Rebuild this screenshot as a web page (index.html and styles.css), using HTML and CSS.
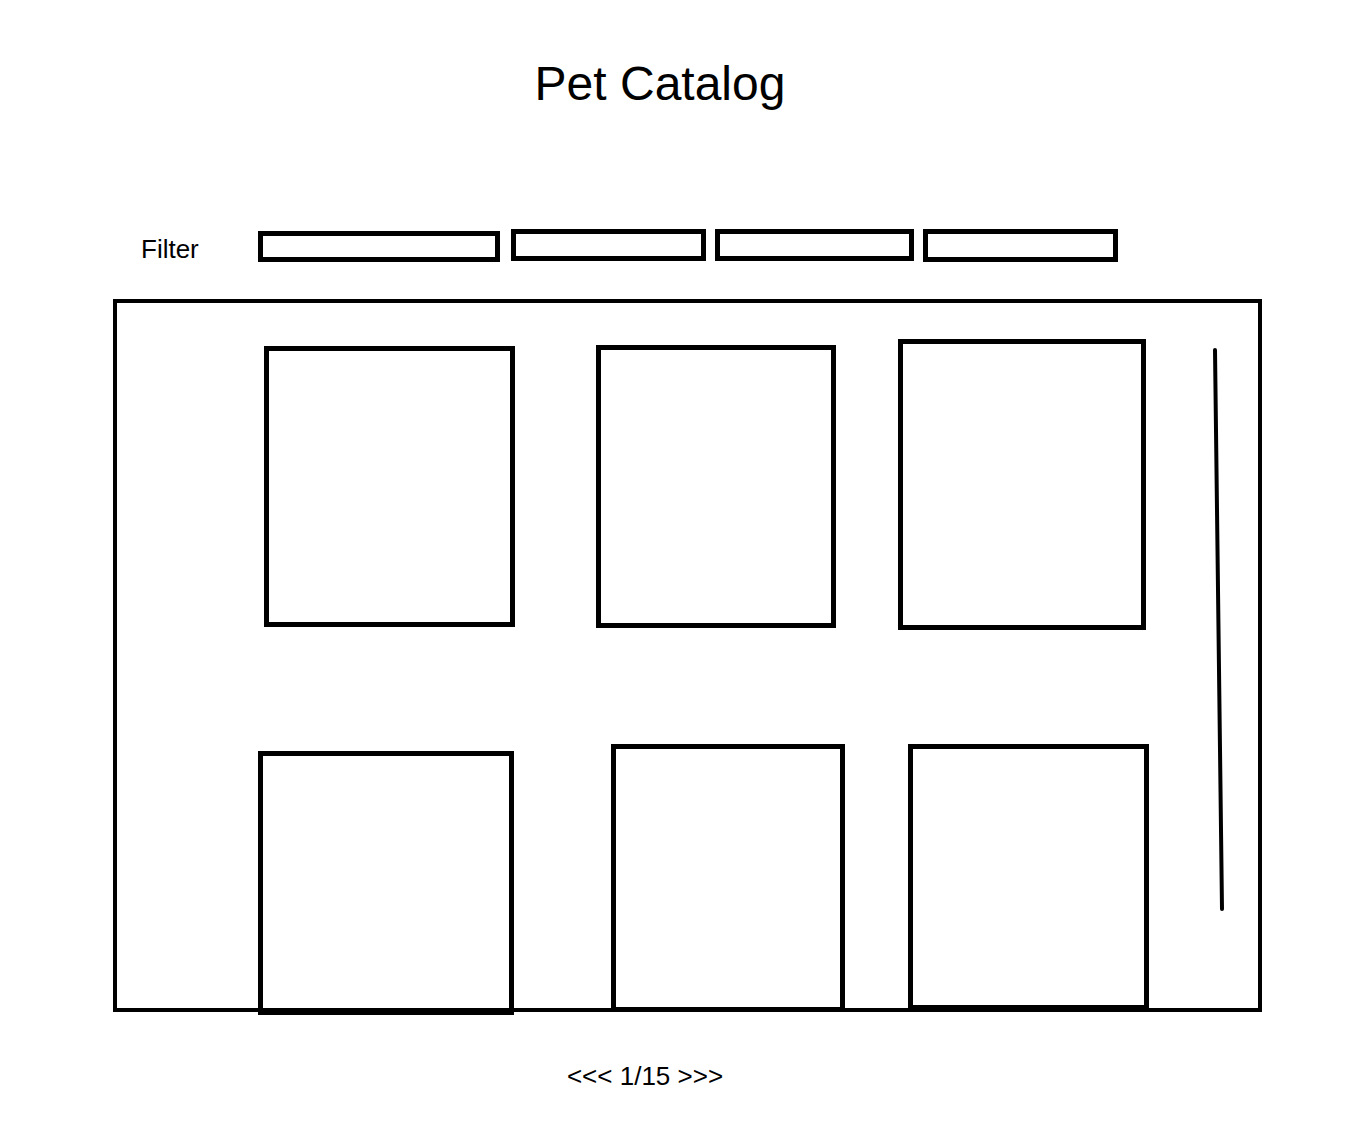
FILE: index.html
```html
<!DOCTYPE html>
<html lang="en">
<head>
  <meta charset="UTF-8">
  <title>Pet Catalog</title>
  <link rel="stylesheet" href="styles.css">
</head>
<body>
  <h1 class="title">Pet Catalog</h1>

  <div class="filter-bar">
    <span class="filter-label">Filter</span>
    <div class="filter-field"></div>
    <div class="filter-field"></div>
    <div class="filter-field"></div>
    <div class="filter-field"></div>
  </div>

  <section class="catalog">
    <div class="pet-grid">
      <div class="pet-card"></div>
      <div class="pet-card"></div>
      <div class="pet-card"></div>
      <div class="pet-card"></div>
      <div class="pet-card"></div>
      <div class="pet-card"></div>
    </div>
    <!-- scroll bar -->
    <svg class="scroll-track" width="14" height="566" viewBox="0 0 14 566">
      <line x1="3" y1="3" x2="10" y2="562" stroke="#000" stroke-width="4" stroke-linecap="round"/>
    </svg>
  </section>

  <div class="pager">&lt;&lt;&lt; 1/15 &gt;&gt;&gt;</div>
</body>
</html>
```

FILE: styles.css
```css
* { box-sizing: border-box; }
body {
  margin: 0;
  background: #fff;
  color: #000;
  font-family: "Liberation Sans", Arial, sans-serif;
}
.title {
  margin: 56px 0 0;
  padding-right: 43px;
  font-size: 48px;
  font-weight: normal;
  line-height: 56px;
  text-align: center;
}

.filter-bar {
  display: flex;
  align-items: flex-start;
  margin-top: 117px;
  padding-left: 141px;
}
.filter-label {
  width: 117px;
  margin-top: 5px;
  font-size: 26px;
  line-height: 30px;
}
.filter-field {
  height: 32px;
  border: 5px solid #000;
}
.filter-field:nth-of-type(1) { width: 242px; height: 31px; margin-top: 2px; }
.filter-field:nth-of-type(2) { width: 195px; margin-left: 11px; }
.filter-field:nth-of-type(3) { width: 199px; margin-left: 9px; }
.filter-field:nth-of-type(4) { width: 195px; margin-left: 9px; height: 33px; }

.catalog {
  display: flex;
  align-items: flex-start;
  width: 1149px;
  height: 713px;
  margin: 35px 0 0 113px;
  padding: 36px 0 0 141px;
  border: 4px solid #000;
}
.pet-grid {
  display: grid;
  grid-template-columns: 338px 302px 251px;
  grid-template-rows: 405px auto;
  align-items: start;
}
.pet-card {
  border: 5px solid #000;
}
.pet-card:nth-child(1) { width: 251px; height: 281px; margin: 7px 0 0 6px; }
.pet-card:nth-child(2) { width: 240px; height: 283px; margin-top: 6px; }
.pet-card:nth-child(3) { width: 248px; height: 291px; }
.pet-card:nth-child(4) { width: 256px; height: 264px; margin-top: 7px; }
.pet-card:nth-child(5) { width: 234px; height: 268px; margin-left: 15px; }
.pet-card:nth-child(6) { width: 241px; height: 266px; margin-left: 10px; }

.scroll-track {
  flex: none;
  margin: 8px 0 0 63px;
}

.pager {
  margin-top: 49px;
  padding-right: 73px;
  font-size: 26px;
  line-height: 30px;
  text-align: center;
}
```
